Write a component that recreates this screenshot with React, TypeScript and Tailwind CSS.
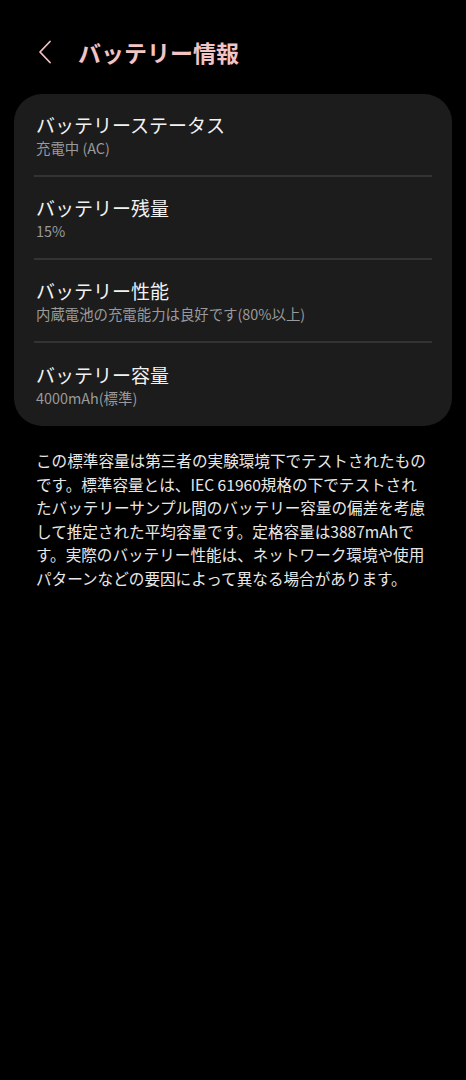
import React from "react";

const font = { fontFamily: '"Noto Sans CJK JP", "Noto Sans", Roboto, sans-serif' };

const rows = [
  { title: "バッテリーステータス", sub: "充電中 (AC)" },
  { title: "バッテリー残量", sub: "15%" },
  { title: "バッテリー性能", sub: "内蔵電池の充電能力は良好です(80%以上)" },
  { title: "バッテリー容量", sub: "4000mAh(標準)" },
];

const lines = [
  "この標準容量は第三者の実験環境下でテストされたもの",
  "です。標準容量とは、IEC 61960規格の下でテストされ",
  "たバッテリーサンプル間のバッテリー容量の偏差を考慮",
  "して推定された平均容量です。定格容量は3887mAhで",
  "す。実際のバッテリー性能は、ネットワーク環境や使用",
  "パターンなどの要因によって異なる場合があります。",
];

export default function App() {
  return (
    <div className="min-h-[1080px] w-[466px] bg-black" style={font}>
      <div className="flex h-[94px] items-start pt-[40px]">
        <div className="flex w-[78px] items-center pl-[36px]">
          <svg width="18" height="24" viewBox="0 0 18 24" fill="none">
            <path d="M14 1.5 L4 12 L14 22.5" stroke="#f0c2c2" strokeWidth="1.8" strokeLinecap="round" strokeLinejoin="round" />
          </svg>
        </div>
        <div className="text-[23px] font-bold leading-[24px] text-[#f2c4c4]">バッテリー情報</div>
      </div>
      <div className="mx-[14px] flex flex-col rounded-[28px] bg-[#1c1c1c] px-[20px]">
        {rows.map((r, i) => (
          <div key={i} className={`flex h-[83px] flex-col justify-center pl-[2px] ${i < rows.length - 1 ? "border-b-2 border-[#333333]" : ""}`}>
            <div className="text-[19px] leading-[26px] text-[#f2f2f2]">{r.title}</div>
            <div className="text-[14.4px] leading-[20px] text-[#9a9a9a]">{r.sub}</div>
          </div>
        ))}
      </div>
      <div className="px-[36px] pt-[23px] text-[15.6px] leading-[23.6px] text-[#e8e8e8]">
        {lines.map((l, i) => (
          <div key={i} className="whitespace-nowrap">{l}</div>
        ))}
      </div>
    </div>
  );
}
